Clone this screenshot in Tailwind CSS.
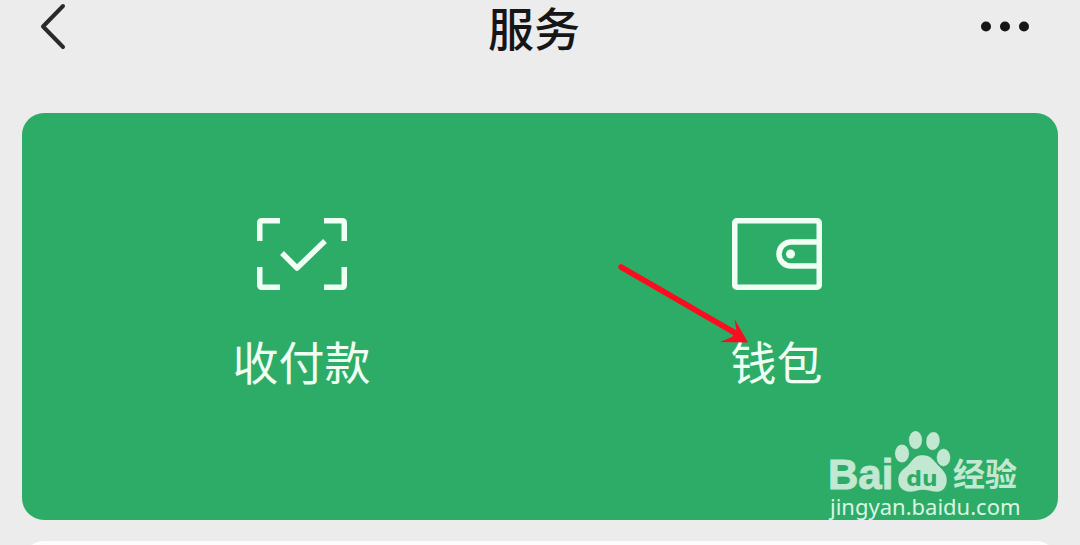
<!DOCTYPE html>
<html lang="zh-CN">
<head>
  <meta charset="UTF-8">
  <meta name="viewport" content="width=device-width, initial-scale=1.0">
  <title>服务</title>
  <script src="https://cdn.jsdelivr.net/npm/@tailwindcss/browser@4"></script>
</head>
<body class="h-screen overflow-hidden bg-[#ececec] font-['Noto_Sans_CJK_SC',sans-serif]">
  <header class="grid grid-cols-3 items-center pl-9 pr-12 mb-[61px] text-[#161616]">
    <button type="button" aria-label="返回" class="justify-self-start">
      <svg class="block w-8 h-12" viewBox="0 0 32 48" fill="none" stroke="#2a2a2a" stroke-width="4" stroke-linecap="round" stroke-linejoin="round">
        <path d="M27 4 7 24.500 27 45"/>
      </svg>
    </button>
    <h1 class="justify-self-center text-[46px] leading-[52px] font-medium">服务</h1>
    <button type="button" aria-label="更多" class="justify-self-end">
      <svg class="block w-14 h-12" viewBox="0 0 56 48" fill="#161616">
        <circle cx="10" cy="24.500" r="5"/>
        <circle cx="29" cy="24.500" r="5"/>
        <circle cx="48" cy="24.500" r="5"/>
      </svg>
    </button>
  </header>

  <main class="px-[22px]">
    <section class="relative grid grid-cols-2 pl-[42px] pr-11 pt-[105px] pb-33 rounded-[22px] bg-[#2dac68] text-[#effff3]">
      <a href="#pay" class="flex flex-col items-center gap-[42px]">
        <svg class="w-[90px] h-[72px]" viewBox="0 0 90 72" fill="none" stroke="currentColor" stroke-width="5.500">
          <path d="M23 2.750H5Q2.750 2.750 2.750 5V23M67 2.750h18q2.250 0 2.250 2.250V23M2.750 49v18q0 2.250 2.250 2.250h18M87.250 49v18q0 2.250-2.250 2.250H67"/>
          <path d="M25 35 40 50 68 23" stroke-linejoin="round"/>
        </svg>
        <span class="text-[46px] leading-[56px] font-normal">收付款</span>
      </a>
      <a href="#wallet" class="relative flex flex-col items-center gap-[42px]">
        <svg class="w-[90px] h-[72px]" viewBox="0 0 90 72" fill="none" stroke="currentColor" stroke-width="5.500">
          <rect x="2.750" y="2.750" width="84.500" height="66.500" rx="2"/>
          <path d="M87 24H59a12 12 0 0 0 0 24H87"/>
          <circle cx="58.500" cy="36" r="4.500" fill="currentColor" stroke="none"/>
        </svg>
        <span class="text-[46px] leading-[56px] font-normal">钱包</span>
        <!-- arrow pointing at the wallet -->
        <svg class="absolute right-1/2 top-11 mr-7 w-[132px] h-[84px]" viewBox="0 0 132 84">
          <path d="M4 5 120 72" stroke="#fb0d20" stroke-width="5.500" stroke-linecap="round"/>
          <path d="M131 80.500 117.500 57 119.500 69 115 75 103 80Z" fill="#fb0d20"/>
        </svg>
      </a>

      <!-- watermark -->
      <svg class="absolute right-[32px] -bottom-[6px] w-[200px] h-[100px]" viewBox="0 0 200 100" fill="#c2e8d2">
        <text x="2" y="63" font-family="Liberation Sans, sans-serif" font-weight="700" font-size="42" stroke="#c2e8d2">Bai</text>
        <g stroke="#27935a" stroke-width=".4">
          <ellipse cx="76" cy="27.500" rx="7.300" ry="9.300"/>
          <ellipse cx="89.500" cy="14" rx="6.800" ry="9.300"/>
          <ellipse cx="107" cy="15" rx="7" ry="9.300" transform="rotate(8 107 15)"/>
          <ellipse cx="117.500" cy="31.500" rx="7" ry="9"/>
          <path d="M97 29C89 28 86 35 81 40 76 44 72 47 72 54 72 62 78 66 84 66 89 66 92 64 97 64S106 66 111 66C117 66 121 61 121 54 121 47 116 43 112 39 107 33 104 29 97 29Z"/>
        </g>
        <text x="96" y="60" text-anchor="middle" font-family="DejaVu Sans, sans-serif" font-weight="700" font-size="22" fill="#2dac68">du</text>
        <text x="127" y="60" font-family="Noto Sans CJK SC, sans-serif" font-weight="700" font-size="32">经验</text>
        <text x="4" y="89" font-family="Noto Sans, sans-serif" font-size="22" fill="#dcf4e5">jingyan.baidu.com</text>
      </svg>
    </section>

    <section class="mt-[21px] h-24 rounded-[22px] bg-[#fdfdfc]"></section>
  </main>
</body>
</html>
